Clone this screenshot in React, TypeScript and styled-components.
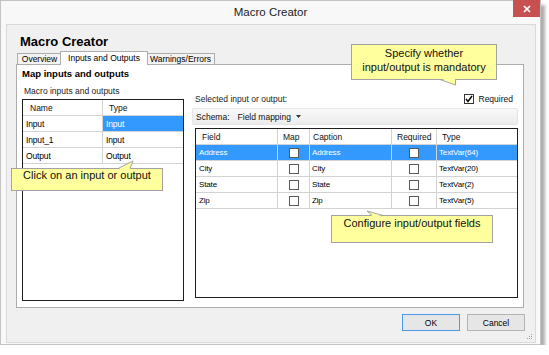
import { Fragment } from 'react';
import styled, { createGlobalStyle } from 'styled-components';

const GlobalStyle = createGlobalStyle`
  html, body {
    margin: 0;
    padding: 0;
    background: #fff;
  }
  body {
    font-family: "Liberation Sans", Arial, sans-serif;
    color: #000;
  }
`;

const Window = styled.div`
  position: relative;
  width: 541px;
  height: 345px;
  box-sizing: border-box;
  border: 1px solid #c4c4c4;
  background: #f8f8f8;
  box-shadow: 4px 5px 3px rgba(0, 0, 0, 0.32);
  display: flex;
  flex-direction: column;
`;

const TitleBar = styled.div`
  height: 23px;
  display: grid;
  grid-template-columns: 1fr auto 1fr;
  align-items: start;
`;

const Title = styled.div`
  grid-column: 2;
  font-size: 11.5px;
  line-height: 23px;
  color: #222;
`;

const CloseButton = styled.div`
  grid-column: 3;
  justify-self: end;
  margin-top: -1px;
  width: 27px;
  height: 17px;
  background: #c75050;
  display: flex;
  align-items: center;
  justify-content: center;
`;

const Client = styled.div`
  position: relative;
  flex: 1;
  margin: 0 4px 1px 5px;
  border: 1px solid #d9d9d9;
  background: #f0f0f0;
  padding: 9px 11px 0 9px;
  display: flex;
  flex-direction: column;
`;

const Heading = styled.div`
  margin-left: 4px;
  font-size: 13px;
  font-weight: bold;
  line-height: 16px;
`;

const TabStrip = styled.div`
  position: relative;
  z-index: 1;
  height: 14px;
  padding-left: 1px;
  display: flex;
  align-items: flex-end;
`;

const Tab = styled.div<{ $active?: boolean; $width: number }>`
  position: relative;
  z-index: ${(p) => (p.$active ? 2 : 1)};
  box-sizing: border-box;
  width: ${(p) => p.$width}px;
  height: ${(p) => (p.$active ? 14 : 12)}px;
  margin: 0 ${(p) => (p.$active ? -2 : 0)}px -1px;
  border: 1px solid #adadad;
  border-bottom: ${(p) => (p.$active ? 'none' : '1px solid #adadad')};
  background: ${(p) => (p.$active ? '#fff' : '#f3f3f3')};
  font-size: 8.5px;
  line-height: ${(p) => (p.$active ? 12 : 10)}px;
  text-align: center;
  white-space: nowrap;
`;

const TabPanel = styled.div`
  height: 244px;
  box-sizing: border-box;
  border: 1px solid #adadad;
  background: #fff;
  padding: 3px 5px 6px 5px;
  display: flex;
  flex-direction: column;
`;

const SectionTitle = styled.div`
  font-size: 9.5px;
  font-weight: bold;
  line-height: 12px;
`;

const PanelBody = styled.div`
  flex: 1;
  display: grid;
  grid-template-columns: 162px 1fr;
  column-gap: 11px;
`;

const LeftColumn = styled.div`
  display: flex;
  flex-direction: column;
`;

const RightColumn = styled.div`
  display: flex;
  flex-direction: column;
  padding-top: 11px;
  padding-bottom: 3px;
`;

const Label = styled.div`
  margin-top: 4px;
  margin-left: 2px;
  font-size: 8.5px;
  line-height: 15px;
  color: #222;
`;

const DataGrid = styled.div<{ $columns: string }>`
  flex: 1;
  border: 1px solid #1e1e1e;
  background: #fff;
  display: grid;
  grid-template-columns: ${(p) => p.$columns};
  grid-auto-rows: 16px;
  align-content: start;
`;

const Cell = styled.div<{
  $pad?: number;
  $size?: number;
  $selected?: boolean;
  $center?: boolean;
  $last?: boolean;
}>`
  box-sizing: border-box;
  border-right: ${(p) => (p.$last ? 'none' : '1px solid #d2d2d2')};
  border-bottom: 1px solid #d2d2d2;
  padding-left: ${(p) => p.$pad ?? 3}px;
  background: ${(p) => (p.$selected ? '#3399ff' : '#fff')};
  color: ${(p) => (p.$selected ? '#fff' : '#000')};
  display: flex;
  align-items: center;
  justify-content: ${(p) => (p.$center ? 'center' : 'flex-start')};
  font-size: ${(p) => p.$size ?? 8}px;
  letter-spacing: -0.15px;
  white-space: nowrap;
  overflow: hidden;
`;

const HeaderCell = styled(Cell)`
  font-size: 8.5px;
  letter-spacing: 0;
  color: #111;
`;

const Box = styled.div`
  width: 10px;
  height: 10px;
  box-sizing: border-box;
  border: 1px solid #5a5a5a;
  background: #fff;
`;

const TopRow = styled.div`
  height: 16px;
  padding-right: 5px;
  display: flex;
  align-items: center;
  justify-content: space-between;
  font-size: 8.5px;
  color: #222;
`;

const CheckLabel = styled.label`
  display: flex;
  align-items: center;
  gap: 5px;
  font-size: 8.5px;
  color: #111;
`;

const CheckBox = styled.div`
  width: 10px;
  height: 10px;
  box-sizing: border-box;
  border: 1px solid #333;
  background: #fff;
  display: flex;
  align-items: center;
  justify-content: center;
`;

const SchemaBar = styled.div`
  margin: 1px 0 0 -3px;
  height: 17px;
  box-sizing: border-box;
  padding-left: 3px;
  border: 1px solid #e4e4e4;
  border-radius: 2px;
  background: linear-gradient(#f9f9f9, #ececec);
  display: flex;
  align-items: center;
  gap: 8px;
  font-size: 8.5px;
  color: #111;
`;

const Dropdown = styled.span`
  display: flex;
  align-items: center;
  gap: 5px;
`;

const FieldGrid = styled(DataGrid)`
  margin-top: 3px;
`;

const ButtonRow = styled.div`
  margin: 6px -1px 0 0;
  display: flex;
  justify-content: flex-end;
  gap: 7px;
`;

const Button = styled.button<{ $focused?: boolean }>`
  width: 58px;
  height: 17px;
  box-sizing: border-box;
  padding: 0;
  border: 1px solid ${(p) => (p.$focused ? '#4a9ae8' : '#b4b4b4')};
  background: #e6e6e6;
  font-family: "Liberation Sans", Arial, sans-serif;
  font-size: 8.5px;
  color: #000;
`;

const Grip = styled.svg`
  position: absolute;
  right: 2px;
  bottom: 2px;
`;

const Callout = styled.div<{ $x: number; $y: number; $w: number; $h: number; $pt: number }>`
  position: absolute;
  left: ${(p) => p.$x - 1}px;
  top: ${(p) => p.$y - 1}px;
  width: ${(p) => p.$w}px;
  height: ${(p) => p.$h}px;
  box-sizing: border-box;
  padding-top: ${(p) => p.$pt}px;
  border: 1px solid #a3a3a3;
  background: #ffff9e;
  font-size: 11px;
  line-height: 13.5px;
  text-align: center;
  color: #111;
`;

const Tail = styled.svg`
  position: absolute;
  left: -1px;
  top: -1px;
  overflow: visible;
`;

const leftRows = [
  { name: 'Input', type: 'Input', selected: true },
  { name: 'Input_1', type: 'Input' },
  { name: 'Output', type: 'Output' },
];

const fieldRows = [
  { field: 'Address', type: 'TextVar(64)', selected: true },
  { field: 'City', type: 'TextVar(20)' },
  { field: 'State', type: 'TextVar(2)' },
  { field: 'Zip', type: 'TextVar(5)' },
];

type TailProps = { w: number; h: number; fill: string; edge: string };

const CalloutTail = ({ w, h, fill, edge }: TailProps) => (
  <Tail width={w} height={h} viewBox={`0 0 ${w} ${h}`}>
    <polygon points={fill} fill="#ffff9e" />
    <polyline points={edge} fill="none" stroke="#a3a3a3" strokeWidth="1" />
  </Tail>
);

const App = () => {
  return (
    <>
      <GlobalStyle />
      <Window>
        <TitleBar>
          <Title>Macro Creator</Title>
          <CloseButton>
            <svg width="8" height="8" viewBox="0 0 8 8">
              <path d="M1 1L7 7M7 1L1 7" stroke="#fff" strokeWidth="1.7" />
            </svg>
          </CloseButton>
        </TitleBar>

        <Client>
          <Heading>Macro Creator</Heading>
          <TabStrip>
            <Tab $width={45}>Overview</Tab>
            <Tab $width={88} $active>
              Inputs and Outputs
            </Tab>
            <Tab $width={69}>Warnings/Errors</Tab>
          </TabStrip>

          <TabPanel>
            <SectionTitle>Map inputs and outputs</SectionTitle>
            <PanelBody>
              <LeftColumn>
                <Label>Macro inputs and outputs</Label>
                <DataGrid $columns="80px 1fr">
                  <HeaderCell $pad={7}>Name</HeaderCell>
                  <HeaderCell $pad={6} $last>
                    Type
                  </HeaderCell>
                  {leftRows.map((row) => (
                    <Fragment key={row.name}>
                      <Cell $size={8.5}>{row.name}</Cell>
                      <Cell $size={8.5} $selected={row.selected} $last>
                        {row.type}
                      </Cell>
                    </Fragment>
                  ))}
                </DataGrid>
              </LeftColumn>

              <RightColumn>
                <TopRow>
                  <span>Selected input or output:</span>
                  <CheckLabel>
                    <CheckBox>
                      <svg width="8" height="8" viewBox="0 0 8 8">
                        <path d="M1 4L3 6.5L7 1" fill="none" stroke="#111" strokeWidth="1.6" />
                      </svg>
                    </CheckBox>
                    Required
                  </CheckLabel>
                </TopRow>
                <SchemaBar>
                  <span>Schema:</span>
                  <Dropdown>
                    Field mapping
                    <svg width="5" height="3" viewBox="0 0 5 3">
                      <path d="M0 0H5L2.5 3Z" fill="#333" />
                    </svg>
                  </Dropdown>
                </SchemaBar>
                <FieldGrid $columns="82px 32px 82px 45px 1fr">
                  <HeaderCell $pad={6}>Field</HeaderCell>
                  <HeaderCell $pad={5}>Map</HeaderCell>
                  <HeaderCell $pad={3}>Caption</HeaderCell>
                  <HeaderCell $pad={5}>Required</HeaderCell>
                  <HeaderCell $pad={5} $last>
                    Type
                  </HeaderCell>
                  {fieldRows.map((row) => (
                    <Fragment key={row.field}>
                      <Cell $selected={row.selected}>{row.field}</Cell>
                      <Cell $selected={row.selected} $center $pad={0}>
                        <Box />
                      </Cell>
                      <Cell $selected={row.selected} $pad={2}>
                        {row.field}
                      </Cell>
                      <Cell $selected={row.selected} $center $pad={0}>
                        <Box />
                      </Cell>
                      <Cell $selected={row.selected} $pad={2} $last>
                        {row.type}
                      </Cell>
                    </Fragment>
                  ))}
                </FieldGrid>
              </RightColumn>
            </PanelBody>
          </TabPanel>

          <ButtonRow>
            <Button $focused>OK</Button>
            <Button>Cancel</Button>
          </ButtonRow>

          <Grip width="7" height="7" viewBox="0 0 7 7">
            <rect x="5" y="1" width="1" height="1" fill="#a0a0a0" />
            <rect x="3" y="3" width="1" height="1" fill="#a0a0a0" />
            <rect x="5" y="3" width="1" height="1" fill="#a0a0a0" />
            <rect x="1" y="5" width="1" height="1" fill="#a0a0a0" />
            <rect x="3" y="5" width="1" height="1" fill="#a0a0a0" />
            <rect x="5" y="5" width="1" height="1" fill="#a0a0a0" />
          </Grip>
        </Client>

        <Callout $x={351} $y={44} $w={146} $h={36} $pt={2}>
          <CalloutTail w={146} h={36} fill="89,34 104,41 104,34" edge="89,35.5 104.5,41 104.5,35.5" />
          Specify whether
          <br />
          input/output is mandatory
        </Callout>

        <Callout $x={11} $y={168} $w={152} $h={23} $pt={0}>
          <CalloutTail w={152} h={23} fill="107,1.5 122,-7 119,1.5" edge="107,0.5 122,-7 119,0.5" />
          Click on an input or output
        </Callout>

        <Callout $x={331} $y={215} $w={162} $h={28} $pt={1}>
          <CalloutTail w={162} h={28} fill="36,-4 41,1.5 52,1.5" edge="41,0.5 36,-4 52,0.5" />
          Configure input/output fields
        </Callout>
      </Window>
    </>
  );
};

export default App;
